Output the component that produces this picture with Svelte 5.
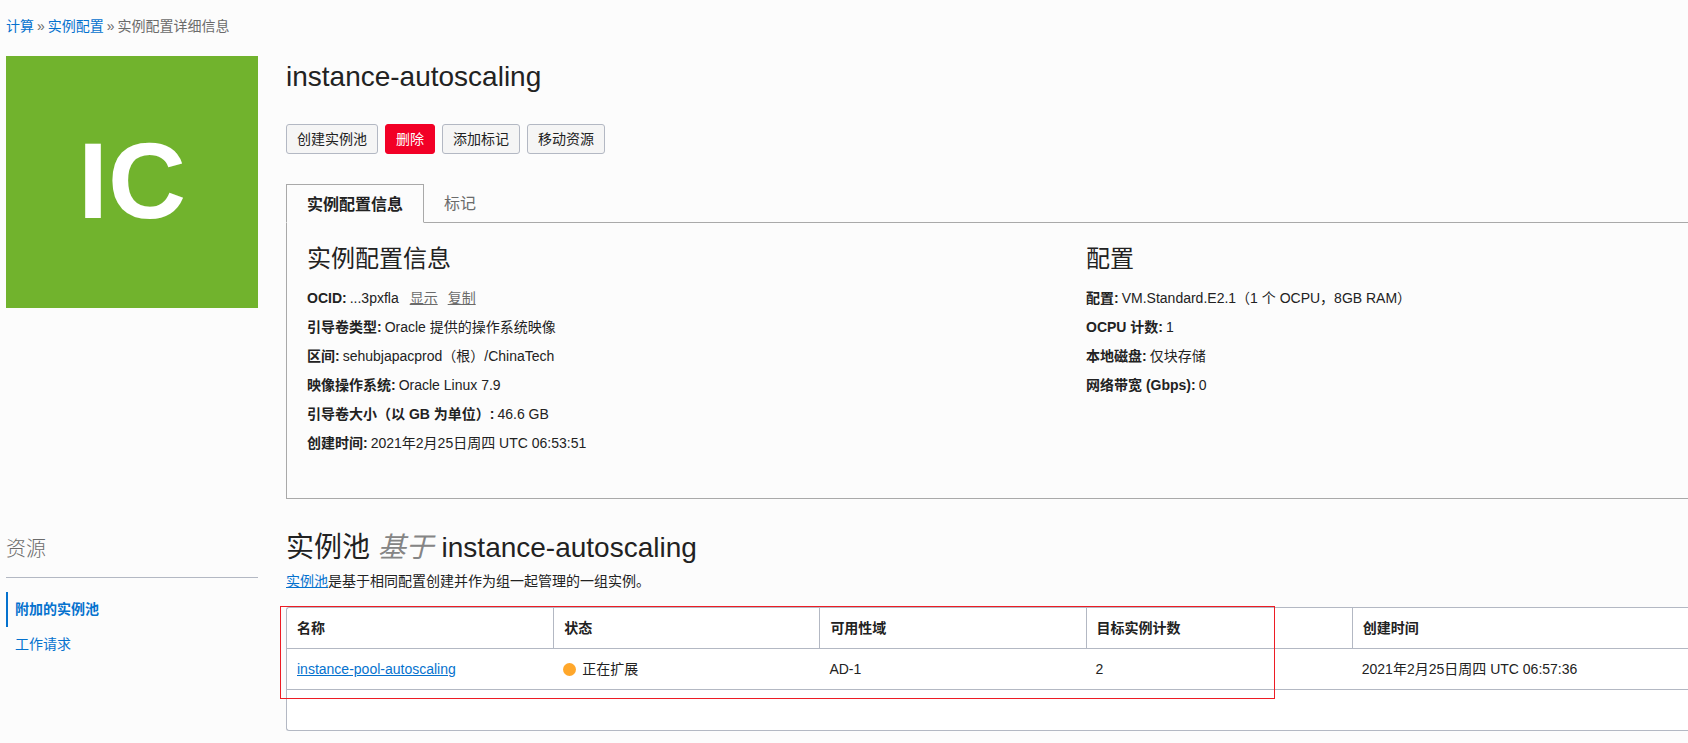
<script>
  const actions = [
    { label: '创建实例池' },
    { label: '删除', danger: true },
    { label: '添加标记' },
    { label: '移动资源' }
  ];

  const tabs = ['实例配置信息', '标记'];
  let activeTab = $state(0);

  const general = [
    { label: 'OCID:', value: '...3pxfla', links: ['显示', '复制'] },
    { label: '引导卷类型:', value: 'Oracle 提供的操作系统映像' },
    { label: '区间:', value: 'sehubjapacprod（根）/ChinaTech' },
    { label: '映像操作系统:', value: 'Oracle Linux 7.9' },
    { label: '引导卷大小（以 GB 为单位）:', value: '46.6 GB' },
    { label: '创建时间:', value: '2021年2月25日周四 UTC 06:53:51' }
  ];

  const shape = [
    { label: '配置:', value: 'VM.Standard.E2.1（1 个 OCPU，8GB RAM）' },
    { label: 'OCPU 计数:', value: '1' },
    { label: '本地磁盘:', value: '仅块存储' },
    { label: '网络带宽 (Gbps):', value: '0' }
  ];

  const columns = ['名称', '状态', '可用性域', '目标实例计数', '创建时间'];
  const pools = [
    {
      name: 'instance-pool-autoscaling',
      status: '正在扩展',
      domain: 'AD-1',
      count: '2',
      created: '2021年2月25日周四 UTC 06:57:36'
    }
  ];
</script>

{#snippet details(title, rows)}
  <section>
    <h3>{title}</h3>
    <dl>
      {#each rows as row}
        <div class="detail">
          <dt>{row.label}</dt>
          <dd>{row.value}</dd>
          {#if row.links}
            <dd class="links">
              {#each row.links as link}<a href="#{link}">{link}</a>{/each}
            </dd>
          {/if}
        </div>
      {/each}
    </dl>
  </section>
{/snippet}

<div class="page">
  <nav class="crumbs">
    <a href="#compute">计算</a><span>»</span><a href="#configs">实例配置</a><span>»</span><span>实例配置详细信息</span>
  </nav>

  <div class="layout">
    <div class="badge">IC</div>

    <main>
      <h1>instance-autoscaling</h1>

      <div class="actions">
        {#each actions as action}
          <button type="button" class="action" class:danger={action.danger}>{action.label}</button>
        {/each}
      </div>

      <div class="tabs" role="tablist">
        {#each tabs as tab, i}
          <button
            type="button"
            role="tab"
            class="tab"
            class:active={activeTab === i}
            aria-selected={activeTab === i}
            onclick={() => (activeTab = i)}>{tab}</button>
        {/each}
        <div class="tab-line"></div>
      </div>

      <div class="panel">
        {@render details('实例配置信息', general)}
        {@render details('配置', shape)}
      </div>
    </main>

    <aside>
      <h2 class="side-title">资源</h2>
      <nav class="side-nav">
        <a class="current" href="#pools">附加的实例池</a>
        <a href="#requests">工作请求</a>
      </nav>
    </aside>

    <section class="pools">
      <h2 class="pools-title">实例池 <em>基于</em> instance-autoscaling</h2>
      <p><a href="#pool-help">实例池</a>是基于相同配置创建并作为组一起管理的一组实例。</p>

      <div class="table-wrap">
        <table>
          <thead>
            <tr>
              {#each columns as column}<th scope="col">{column}</th>{/each}
            </tr>
          </thead>
          <tbody>
            {#each pools as pool}
              <tr>
                <td><a href="#pool">{pool.name}</a></td>
                <td><span class="status"><span class="dot"></span>{pool.status}</span></td>
                <td>{pool.domain}</td>
                <td>{pool.count}</td>
                <td>{pool.created}</td>
              </tr>
            {/each}
          </tbody>
          <tfoot>
            <tr><td colspan="5"></td></tr>
          </tfoot>
        </table>
        <div class="highlight"></div>
      </div>
    </section>
  </div>
</div>

<style>
  :global(body) {
    background: #fcfcfc;
  }

  .page {
    padding: 16px 0 12px 6px;
    font-family: 'Liberation Sans', 'Noto Sans CJK SC', sans-serif;
    font-size: 14px;
    line-height: 20px;
    color: #222;
  }

  h1, h2, h3, p, dl, dd {
    margin: 0;
    font-weight: 400;
  }

  a {
    color: #0572ce;
  }

  .crumbs {
    display: flex;
    gap: 3px;
    color: #6b6b6b;
  }

  .crumbs a,
  .side-nav a {
    text-decoration: none;
  }

  .layout {
    display: grid;
    grid-template-columns: 252px minmax(0, 1fr);
    column-gap: 28px;
    margin-top: 20px;
  }

  .badge {
    display: flex;
    align-items: center;
    justify-content: center;
    box-sizing: border-box;
    height: 252px;
    padding-bottom: 2px;
    background: #71b32d;
    color: #fff;
    font-size: 108px;
    font-weight: 700;
    line-height: 120px;
  }

  h1 {
    font-size: 28px;
    line-height: 42px;
  }

  .actions {
    display: flex;
    gap: 7px;
    margin-top: 26px;
  }

  .action {
    height: 30px;
    padding: 0 10px;
    border: 1px solid #b3b8c3;
    border-radius: 3px;
    background: #f5f5f5;
    color: #222;
    font: inherit;
  }

  .action.danger {
    border-color: #f20026;
    background: #f20026;
    color: #fff;
  }

  .tabs {
    display: flex;
    margin-top: 30px;
  }

  .tab {
    height: 39px;
    padding: 2px 20px 0;
    border: 0;
    border-bottom: 1px solid #a9a9a9;
    background: none;
    color: #6b6b6b;
    font: inherit;
    font-size: 16px;
  }

  .tab.active {
    border: 1px solid #a9a9a9;
    border-bottom-color: transparent;
    color: #222;
    font-weight: 700;
  }

  .tab-line {
    flex: 1;
    border-bottom: 1px solid #a9a9a9;
  }

  .panel {
    display: grid;
    grid-template-columns: 22fr 17fr;
    padding: 18px 0 40px 20px;
    border: 1px solid #a9a9a9;
    border-width: 0 0 1px 1px;
  }

  h3 {
    font-size: 24px;
    line-height: 36px;
  }

  dl {
    margin-top: 7px;
  }

  .detail {
    display: flex;
    gap: 3px;
    line-height: 29px;
  }

  dt {
    font-weight: 700;
  }

  .links {
    display: flex;
    gap: 10px;
    margin-left: 8px;
  }

  .links a {
    color: #6b6b6b;
  }

  aside {
    padding-top: 34px;
  }

  .side-title {
    padding-bottom: 12px;
    border-bottom: 1px solid #b3b8c3;
    color: #6b6b6b;
    font-size: 20px;
    font-weight: 300;
    line-height: 32px;
  }

  .side-nav {
    display: flex;
    flex-direction: column;
    margin-top: 14px;
  }

  .side-nav a {
    padding-left: 7px;
    border-left: 2px solid transparent;
    line-height: 35px;
  }

  .side-nav .current {
    border-left-color: #0572ce;
    font-weight: 700;
  }

  .pools {
    padding-top: 28px;
  }

  .pools-title {
    font-size: 28px;
    line-height: 42px;
  }

  em {
    color: #858585;
  }

  p {
    margin-top: 2px;
  }

  .table-wrap {
    position: relative;
    margin-top: 16px;
  }

  table {
    width: 100%;
    table-layout: fixed;
    border: 1px solid #b3b8c3;
    border-right: 0;
    border-radius: 3px 0 0 3px;
    border-spacing: 0;
    background: #fff;
  }

  th,
  td {
    box-sizing: border-box;
    height: 41px;
    padding: 0 10px;
    border-bottom: 1px solid #b3b8c3;
    text-align: left;
  }

  th {
    width: 19%;
    font-weight: 700;
  }

  th + th {
    border-left: 1px solid #b3b8c3;
  }

  th:last-child {
    width: 24%;
  }

  tfoot td {
    height: 40px;
    border-bottom: 0;
  }

  .status {
    display: flex;
    align-items: center;
    gap: 6px;
  }

  .dot {
    width: 13px;
    height: 13px;
    border-radius: 50%;
    background: #ffa72b;
  }

  .highlight {
    position: absolute;
    top: -1px;
    bottom: 32px;
    left: -6px;
    box-sizing: border-box;
    width: 71%;
    border: 1px solid #ed1c24;
    pointer-events: none;
  }
</style>
